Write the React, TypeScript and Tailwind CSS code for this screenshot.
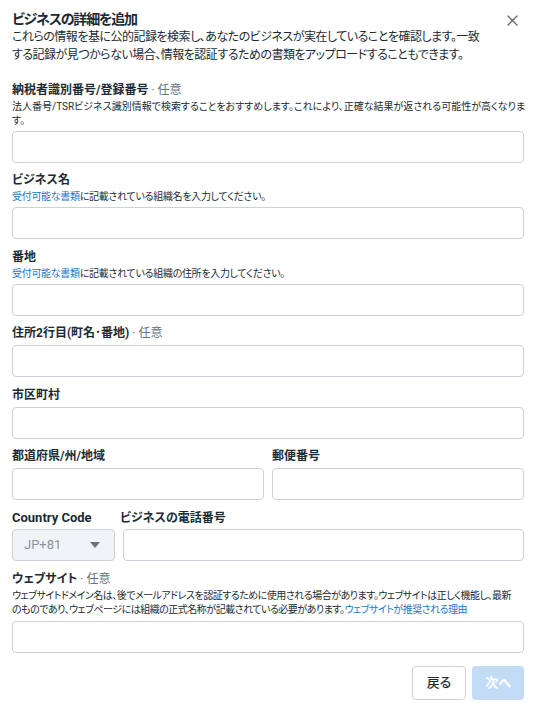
import React from "react";

const FONT =
  "font-['Roboto','Noto_Sans_CJK_JP',sans-serif] [font-feature-settings:'palt']";

function Input({ className = "" }: { className?: string }) {
  return (
    <div
      className={`h-[32px] rounded-[4px] border border-[#cbd2d9] bg-white ${className}`}
    />
  );
}

function Label({
  children,
  optional,
  className = "",
}: {
  children: React.ReactNode;
  optional?: boolean;
  className?: string;
}) {
  return (
    <div
      className={`text-[12px] leading-4 font-bold text-[#1c2b33] whitespace-nowrap ${className}`}
    >
      {children}
      {optional && (
        <span className="font-normal text-[#65737e]"> · 任意</span>
      )}
    </div>
  );
}

function Sub({
  children,
  className = "",
}: {
  children: React.ReactNode;
  className?: string;
}) {
  return (
    <div
      className={`mt-[2px] text-[10px] leading-[14px] text-[#1c2b33] whitespace-nowrap ${className}`}
    >
      {children}
    </div>
  );
}

const Link = ({ children }: { children: React.ReactNode }) => (
  <span className="text-[#1a77c9]">{children}</span>
);

export default function App() {
  return (
    <div
      className={`w-[534px] h-[710px] bg-white pl-3 pr-[10px] text-[#1c2b33] ${FONT}`}
    >
      {/* header */}
      <div className="flex justify-between pt-[10px]">
        <div>
          <div className="text-[14px] leading-[18px] font-bold tracking-[-1.2px]">
            ビジネスの詳細を追加
          </div>
          <div className="text-[12px] leading-[18px] whitespace-nowrap tracking-[-0.5px]">
            これらの情報を基に公的記録を検索し、あなたのビジネスが実在していることを確認します。一致
            <br />
            する記録が見つからない場合、情報を認証するための書類をアップロードすることもできます。
          </div>
        </div>
        <button className="mt-[4px] mr-[6px] h-[12px] w-[12px] flex items-center justify-center text-[#5f6b75]">
          <svg width="11" height="11" viewBox="0 0 11 11" fill="none">
            <path
              d="M1 1L10 10M10 1L1 10"
              stroke="currentColor"
              strokeWidth="1.3"
              strokeLinecap="round"
            />
          </svg>
        </button>
      </div>

      {/* field 1 */}
      <div className="mt-[18px]">
        <Label optional>納税者識別番号/登録番号</Label>
        <Sub>
          法人番号/TSRビジネス識別情報で検索することをおすすめします。これにより、正確な結果が返される可能性が高くなりま
          <br />
          す。
        </Sub>
        <Input className="mt-[3px]" />
      </div>

      {/* field 2 */}
      <div className="mt-[9px]">
        <Label>ビジネス名</Label>
        <Sub className="tracking-[-0.3px]">
          <Link>受付可能な書類</Link>に記載されている組織名を入力してください。
        </Sub>
        <Input className="mt-[3px]" />
      </div>

      {/* field 3 */}
      <div className="mt-[10px]">
        <Label>番地</Label>
        <Sub className="tracking-[-0.3px]">
          <Link>受付可能な書類</Link>に記載されている組織の住所を入力してください。
        </Sub>
        <Input className="mt-[3px]" />
      </div>

      {/* field 4 */}
      <div className="mt-[9px]">
        <Label optional>住所2行目(町名･番地)</Label>
        <Input className="mt-[4px]" />
      </div>

      {/* field 5 */}
      <div className="mt-[10px]">
        <Label>市区町村</Label>
        <Input className="mt-[4px]" />
      </div>

      {/* field 6 */}
      <div className="mt-[9px] grid grid-cols-2 gap-x-2">
        <div>
          <Label>都道府県/州/地域</Label>
          <Input className="mt-[4px]" />
        </div>
        <div>
          <Label>郵便番号</Label>
          <Input className="mt-[4px]" />
        </div>
      </div>

      {/* field 7 */}
      <div className="mt-[10px] flex gap-2">
        <div className="w-[103px]">
          <Label className="text-[13px]">Country Code</Label>
          <div className="mt-[3px] h-[32px] rounded-[4px] border border-[#cbd2d9] bg-[#f1f4f7] flex items-center justify-between pl-[11px] pr-[14px]">
            <span className="text-[13px] text-[#8a959e] font-['Roboto',sans-serif]">
              JP+81
            </span>
            <svg width="10" height="6" viewBox="0 0 10 6">
              <path d="M0 0H10L5 6Z" fill="#67737d" />
            </svg>
          </div>
        </div>
        <div className="flex-1">
          <Label className="-ml-[3px]">ビジネスの電話番号</Label>
          <Input className="mt-[3px]" />
        </div>
      </div>

      {/* field 8 */}
      <div className="mt-[10px]">
        <Label optional>ウェブサイト</Label>
        <Sub className="tracking-[-0.5px]">
          ウェブサイトドメイン名は、後でメールアドレスを認証するために使用される場合があります。ウェブサイトは正しく機能し、最新
          <br />
          のものであり、ウェブページには組織の正式名称が記載されている必要があります。
          <Link>ウェブサイトが推奨される理由</Link>
        </Sub>
        <Input className="mt-[4px]" />
      </div>

      {/* buttons */}
      <div className="mt-[13px] flex justify-end gap-[6px]">
        <button className="h-[34px] w-[54px] rounded-[4px] border border-[#cbd2d9] bg-white text-[13px] font-medium text-[#1c2b33]">
          戻る
        </button>
        <button className="h-[34px] w-[52px] rounded-[4px] bg-[#c3dcf5] text-[13px] font-bold text-white">
          次へ
        </button>
      </div>
    </div>
  );
}
